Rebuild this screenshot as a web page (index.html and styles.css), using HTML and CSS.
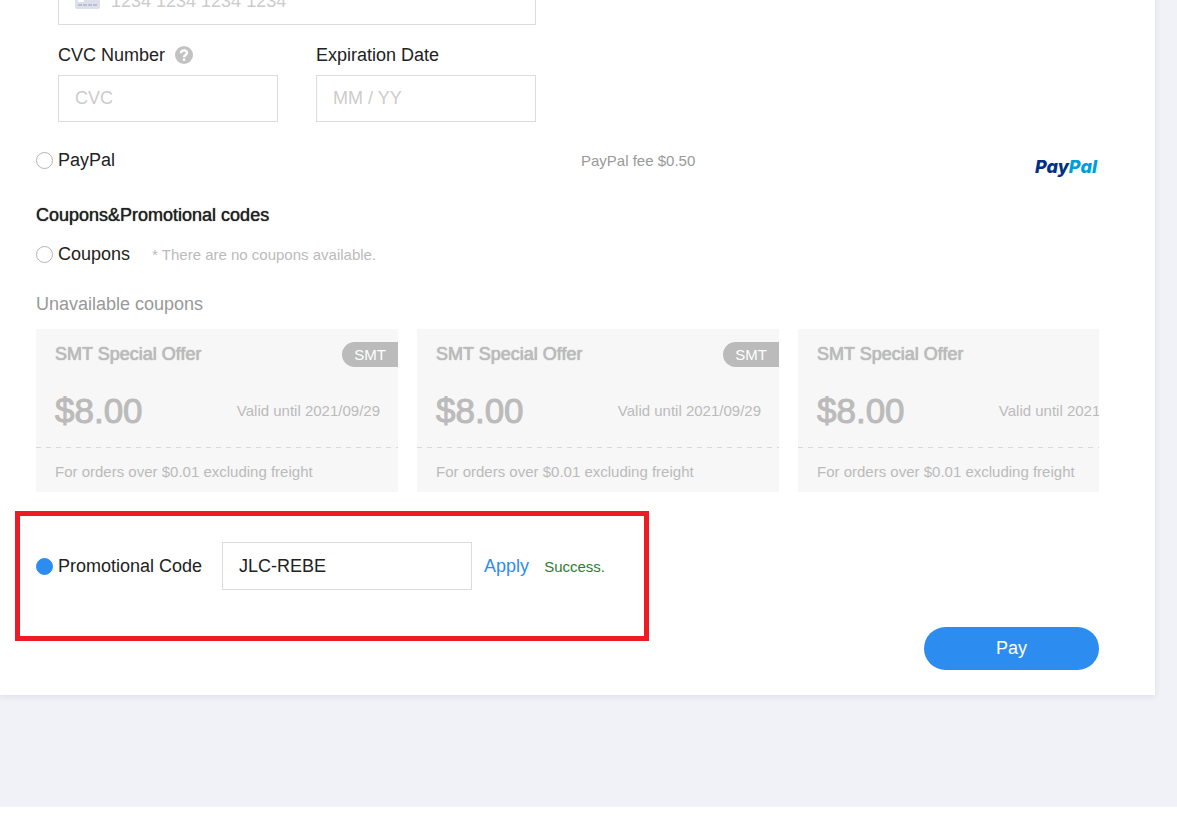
FILE: index.html
```html
<!DOCTYPE html>
<html lang="en">
<head>
    <meta charset="utf-8">
    <title>Payment</title>
    <link rel="stylesheet" href="styles.css">
</head>
<body>
<div class="page">
    <form class="panel">
        <div class="card-form">
            <div class="card-number">
                <svg class="card-icon" width="25" height="20" viewBox="0 0 25 20">
                    <rect width="25" height="20" rx="2" fill="#dce0ea"/>
                    <rect x="3" y="8" width="6" height="5" rx="1" fill="#fff"/>
                    <path d="M3 16h19" stroke="#b9c0d2" stroke-width="2" stroke-dasharray="4 1"/>
                </svg>
                <input type="text" aria-label="Card number" placeholder="1234 1234 1234 1234">
            </div>
            <div class="field">
                <div class="field-label">
                    <label for="cvc">CVC Number</label>
                    <svg width="18" height="18" viewBox="0 0 18 18">
                        <circle cx="9" cy="9" r="9" fill="#c2c2c2"/>
                        <path d="M6 7.2C6 3.4 12 3.4 12 7c0 2-3 2-3 4.200" fill="none" stroke="#fff" stroke-width="2.400"/>
                        <circle cx="9" cy="13.700" r="1.400" fill="#fff"/>
                    </svg>
                </div>
                <input id="cvc" class="textbox" type="text" placeholder="CVC">
            </div>
            <div class="field">
                <div class="field-label"><label for="exp">Expiration Date</label></div>
                <input id="exp" class="textbox" type="text" placeholder="MM / YY">
            </div>
        </div>

        <div class="row paypal">
            <label class="option"><input class="radio" type="radio" name="method">PayPal</label>
            <span class="fee">PayPal fee $0.50</span>
            <span class="logo">Pay<span class="logo-pal">Pal</span></span>
        </div>

        <h2 class="title">Coupons&amp;Promotional codes</h2>
        <div class="row">
            <label class="option"><input class="radio" type="radio" name="discount">Coupons</label>
            <span class="note">* There are no coupons available.</span>
        </div>
        <h3 class="subtitle">Unavailable coupons</h3>

        <div class="coupons">
            <div class="coupon">
                <div class="coupon-head"><h4 class="coupon-name">SMT Special Offer</h4><span class="tag">SMT</span></div>
                <div class="coupon-body"><span class="amount">$8.00</span><span>Valid until 2021/09/29</span></div>
                <div class="coupon-foot">For orders over $0.01 excluding freight</div>
            </div>
            <div class="coupon">
                <div class="coupon-head"><h4 class="coupon-name">SMT Special Offer</h4><span class="tag">SMT</span></div>
                <div class="coupon-body"><span class="amount">$8.00</span><span>Valid until 2021/09/29</span></div>
                <div class="coupon-foot">For orders over $0.01 excluding freight</div>
            </div>
            <div class="coupon">
                <div class="coupon-head"><h4 class="coupon-name">SMT Special Offer</h4></div>
                <div class="coupon-body"><span class="amount">$8.00</span><span>Valid until 2021/09/29</span></div>
                <div class="coupon-foot">For orders over $0.01 excluding freight</div>
            </div>
        </div>

        <div class="bottom">
            <div class="promo">
                <label class="option"><input class="radio" type="radio" name="discount" checked>Promotional Code</label>
                <input class="textbox promo-code" type="text" aria-label="Promotional code" value="JLC-REBE">
                <button class="apply" type="button">Apply</button>
                <span class="success">Success.</span>
            </div>
            <button class="pay" type="button">Pay</button>
        </div>
    </form>
</div>
</body>
</html>
```
FILE: styles.css
```css
* {
    box-sizing: border-box;
}

body {
    margin: 0;
    background-color: #fff;
    color: #222;
    font-family: "Liberation Sans", Arial, sans-serif;
    font-size: 18px;
    overflow: hidden;
}

input, button {
    font: inherit;
    color: inherit;
}

h2, h3, h4 {
    margin: 0;
    font-size: inherit;
    font-weight: normal;
}

.page {
    background-color: #f1f2f7;
    padding: 0 22px 112px 0;
}

.panel {
    background-color: #fff;
    padding: 0 56px 25px 36px;
    box-shadow: 0 2px 6px rgba(60, 60, 120, 0.1);
}

/* card details */
.card-form {
    display: grid;
    grid-template-columns: 220px 220px;
    column-gap: 38px;
    margin: -22px 0 18px 22px;
}

.card-number {
    grid-column: span 2;
    display: flex;
    align-items: center;
    gap: 11px;
    height: 47px;
    padding: 0 16px;
    border: 1px solid #dcdcdc;
}

.card-icon {
    margin-bottom: 6px;
}

.card-number input {
    flex: 1;
    border: 0;
    padding: 0;
    outline: none;
}

.field-label {
    display: flex;
    align-items: center;
    gap: 10px;
    height: 50px;
    padding-top: 10px;
}

.textbox {
    width: 100%;
    height: 47px;
    padding: 0 16px;
    border: 1px solid #dcdcdc;
}

::placeholder {
    color: #ccc;
}

/* options */
.row {
    display: flex;
    align-items: center;
    height: 40px;
}

.option {
    display: flex;
    align-items: center;
    gap: 5px;
    white-space: nowrap;
}

.radio {
    appearance: none;
    width: 17px;
    height: 17px;
    margin: 0;
    border: 1px solid #b5b5b5;
    border-radius: 50%;
}

.radio:checked {
    border-color: #2d8cf0;
    background-color: #2d8cf0;
}

.paypal {
    display: grid;
    grid-template-columns: 545px 1fr auto;
}

.fee {
    color: #999;
    font-size: 15px;
}

.logo {
    color: #003087;
    font: italic 800 18px Inter, sans-serif;
    padding: 12px 2px 0 0;
}

.logo-pal {
    color: #009cde;
}

.title {
    margin-top: 15px;
    line-height: 40px;
    text-shadow: 0 0 1px currentColor;
}

.title + .row {
    margin-top: -1px;
}

.note {
    margin-left: 22px;
    color: #bbb;
    font-size: 15px;
}

.subtitle {
    margin-top: 10px;
    line-height: 40px;
    color: #999;
}

/* coupons */
.coupons {
    display: flex;
    gap: 19px;
    margin: 5px 0 19px;
    overflow: hidden;
}

.coupon {
    flex: 0 0 362px;
    background-color: #f7f7f7;
    color: #bbb;
    font-size: 15px;
}

.coupon-head {
    display: flex;
    align-items: center;
    justify-content: space-between;
    height: 51px;
    padding-left: 19px;
}

.coupon-name {
    font-size: 18px;
    text-shadow: 0 0 1px currentColor, 0 0 1px currentColor;
}

.tag {
    padding: 0 12px;
    border-radius: 13px 0 0 13px;
    background-color: #bbb;
    color: #fff;
    line-height: 25px;
}

.coupon-body {
    display: flex;
    align-items: center;
    justify-content: space-between;
    height: 67px;
    padding: 0 18px 6px 19px;
}

.amount {
    font-size: 35px;
    -webkit-text-stroke: 1px currentColor;
}

.coupon-foot {
    height: 45px;
    padding: 4px 19px 0;
    line-height: 42px;
    background: repeating-linear-gradient(90deg, #d9d9d9 0 5px, transparent 5px 10px) 0 0 / 100% 1px no-repeat;
}

/* promo code and pay */
.bottom {
    display: flex;
    align-items: flex-start;
    justify-content: space-between;
    margin-left: -21px;
}

.promo {
    display: flex;
    align-items: center;
    width: 634px;
    height: 130px;
    padding: 0 16px 20px;
    border: 5px solid #ed1c24;
}

.promo-code {
    width: 250px;
    height: 48px;
    margin-left: 20px;
}

.apply {
    margin-left: 12px;
    padding: 0;
    border: 0;
    background: none;
    color: #2d8cf0;
}

.success {
    margin-left: 15px;
    color: #2f7d32;
    font-size: 15px;
}

.pay {
    width: 175px;
    height: 43px;
    margin-top: 116px;
    border: 0;
    border-radius: 22px;
    background-color: #2d8cf0;
    color: #fff;
}
```
